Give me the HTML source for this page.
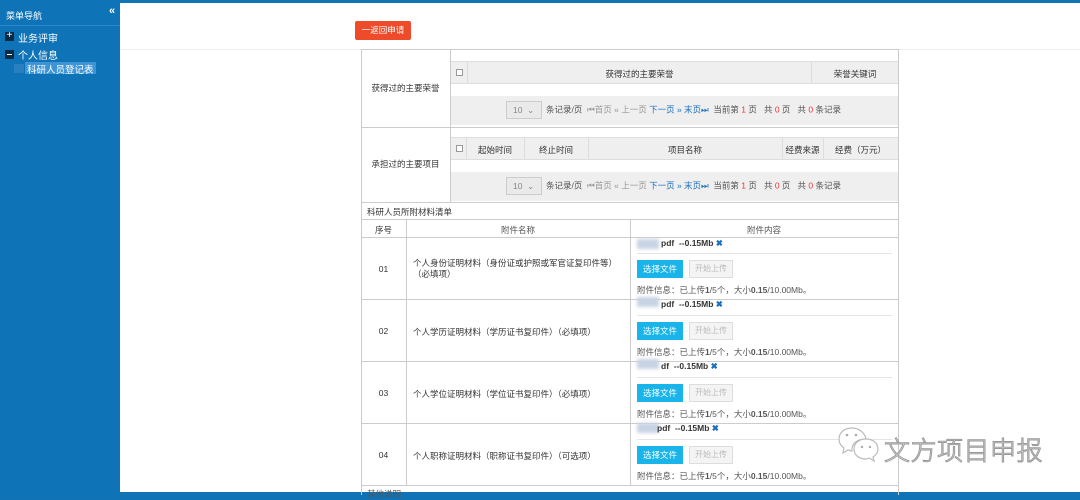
<!DOCTYPE html>
<html><head><meta charset="utf-8"><style>
*{margin:0;padding:0;box-sizing:border-box}
body{width:1080px;height:495px;overflow:hidden;background:#0f73b6;font-family:"Liberation Sans","Noto Sans CJK SC",sans-serif;font-size:9px;color:#333;position:relative}
.a{position:absolute}
.side{left:0;top:0;width:120px;height:495px;background:#0f74b7;color:#fff}
.main{left:120px;top:3px;width:960px;height:489px;background:#fff}
.b{border:1px solid #ccc}
.g{background:#efefef}
.c{text-align:center}
.ch{width:7px;height:7px;border:1px solid #999;background:#fff}
.pg{font-size:8.5px;color:#555;white-space:nowrap}
.sel{display:inline-block;width:36px;height:18px;border:1px solid #ccc;background:#eaeaea;color:#888;vertical-align:middle;padding:3px 0 0 6px;margin-right:4px}
.bl{color:#1b6fc0}.r{color:#e33}.gr{color:#999}
.btn{width:46px;height:18px;background:#19b4ea;color:#fff;text-align:center;line-height:18px;font-size:8.5px}
.btn2{width:44px;height:18px;background:#f4f4f4;border:1px solid #ddd;color:#bbb;text-align:center;line-height:16px;font-size:8px}
.blur{width:22px;height:10px;background:#c8d4e4;filter:blur(1.5px)}
</style></head><body>
<div class="a side">
<div class="a" style="left:6px;top:9px;font-size:9px">菜单导航</div>
<div class="a" style="left:109px;top:5px;font-size:11px;font-weight:bold">«</div>
<div class="a" style="left:0;top:25px;width:120px;height:1px;background:#2a86c8"></div>
<div class="a" style="left:5px;top:32px;width:9px;height:9px;background:#0b2a44;color:#fff;font-size:10px;line-height:8px;text-align:center">+</div>
<div class="a" style="left:18px;top:30px;font-size:10px">业务评审</div>
<div class="a" style="left:5px;top:50px;width:9px;height:9px;background:#0b2a44"><div class="a" style="left:2px;top:4px;width:5px;height:1px;background:#fff"></div></div>
<div class="a" style="left:18px;top:47px;font-size:10px">个人信息</div>
<div class="a" style="left:14px;top:64px;width:10px;height:9px;background:#2a7fc0"></div>
<div class="a" style="left:25px;top:62px;height:12px;background:#3d94d6;font-size:9.5px;padding:0 2px;white-space:nowrap">科研人员登记表</div>
</div>
<div class="a main"></div>
<div class="a" style="left:355px;top:21px;width:56px;height:19px;background:#ee4b2b;border-radius:2px;color:#fff;font-size:8.5px;line-height:19px;text-align:center">一返回申请</div>
<div class="a" style="left:120px;top:49px;width:960px;height:1px;background:#eee"></div>
<div class="a b" style="left:361px;top:49px;width:538px;height:446px;border-bottom:none"></div>
<div class="a" style="left:450px;top:49px;width:1px;height:153px;background:#ccc"></div>
<div class="a" style="left:361px;top:127px;width:538px;height:1px;background:#ccc"></div>
<div class="a" style="left:361px;top:202px;width:538px;height:1px;background:#ccc"></div>
<div class="a c" style="left:361px;top:82px;width:89px;font-size:8.5px">获得过的主要荣誉</div>
<div class="a c" style="left:361px;top:158px;width:89px;font-size:8.5px">承担过的主要项目</div>
<div class="a g" style="left:451px;top:61px;width:447px;height:23px;border-top:1px solid #ddd;border-bottom:1px solid #ddd"></div>
<div class="a ch" style="left:456px;top:69px"></div>
<div class="a" style="left:467px;top:61px;width:1px;height:23px;background:#ddd"></div>
<div class="a" style="left:811px;top:61px;width:1px;height:23px;background:#ddd"></div>
<div class="a c" style="left:468px;top:68px;width:343px;font-size:8.5px">获得过的主要荣誉</div>
<div class="a c" style="left:812px;top:68px;width:86px;font-size:8.5px">荣誉关键词</div>
<div class="a g" style="left:451px;top:96px;width:447px;height:29px"></div>
<div class="a pg" style="left:506px;top:101px"><span class="sel">10 &nbsp;⌄</span>条记录/页 &nbsp;<span class="gr">⏮首页 « 上一页</span> <span class="bl">下一页 » 末页⏭</span> &nbsp;当前第 <span class="r">1</span> 页 &nbsp; 共 <span class="r">0</span> 页 &nbsp; 共 <span class="r">0</span> 条记录</div>
<div class="a g" style="left:451px;top:137px;width:447px;height:23px;border-top:1px solid #ddd;border-bottom:1px solid #ddd"></div>
<div class="a ch" style="left:456px;top:145px"></div>
<div class="a" style="left:466px;top:137px;width:1px;height:23px;background:#ddd"></div>
<div class="a" style="left:524px;top:137px;width:1px;height:23px;background:#ddd"></div>
<div class="a" style="left:588px;top:137px;width:1px;height:23px;background:#ddd"></div>
<div class="a" style="left:782px;top:137px;width:1px;height:23px;background:#ddd"></div>
<div class="a" style="left:823px;top:137px;width:1px;height:23px;background:#ddd"></div>
<div class="a c" style="left:466px;top:144px;width:58px;font-size:8.5px">起始时间</div>
<div class="a c" style="left:524px;top:144px;width:64px;font-size:8.5px">终止时间</div>
<div class="a c" style="left:588px;top:144px;width:194px;font-size:8.5px">项目名称</div>
<div class="a c" style="left:782px;top:144px;width:41px;font-size:8.5px">经费来源</div>
<div class="a c" style="left:823px;top:144px;width:75px;font-size:8.5px">经费（万元）</div>
<div class="a g" style="left:451px;top:172px;width:447px;height:29px"></div>
<div class="a pg" style="left:506px;top:177px"><span class="sel">10 &nbsp;⌄</span>条记录/页 &nbsp;<span class="gr">⏮首页 « 上一页</span> <span class="bl">下一页 » 末页⏭</span> &nbsp;当前第 <span class="r">1</span> 页 &nbsp; 共 <span class="r">0</span> 页 &nbsp; 共 <span class="r">0</span> 条记录</div>
<div class="a" style="left:367px;top:206px;font-size:8.5px">科研人员所附材料清单</div>
<div class="a" style="left:361px;top:219px;width:538px;height:1px;background:#ccc"></div>
<div class="a" style="left:361px;top:237px;width:538px;height:1px;background:#ccc"></div>
<div class="a" style="left:406px;top:219px;width:1px;height:266px;background:#ccc"></div>
<div class="a" style="left:630px;top:219px;width:1px;height:266px;background:#ccc"></div>
<div class="a c" style="left:361px;top:224px;width:45px;font-size:8.5px">序号</div>
<div class="a c" style="left:406px;top:224px;width:224px;font-size:8.5px;color:#555">附件名称</div>
<div class="a c" style="left:630px;top:224px;width:268px;font-size:8.5px;color:#555">附件内容</div>
<div class="a" style="left:361px;top:299px;width:538px;height:1px;background:#ccc"></div>
<div class="a" style="left:361px;top:361px;width:538px;height:1px;background:#ccc"></div>
<div class="a" style="left:361px;top:423px;width:538px;height:1px;background:#ccc"></div>
<div class="a" style="left:361px;top:485px;width:538px;height:1px;background:#ccc"></div>
<div class="a" style="left:367px;top:488px;font-size:8.5px;color:#555">其他说明</div>
<div class="a c" style="left:361px;top:264px;width:45px;font-size:8.5px">01</div>
<div class="a" style="left:413px;top:258px;width:212px;font-size:8.5px;line-height:11px">个人身份证明材料（身份证或护照或军官证复印件等）（必填项）</div>
<div class="a c" style="left:361px;top:326px;width:45px;font-size:8.5px">02</div>
<div class="a" style="left:413px;top:326px;font-size:8.5px">个人学历证明材料（学历证书复印件）（必填项）</div>
<div class="a c" style="left:361px;top:388px;width:45px;font-size:8.5px">03</div>
<div class="a" style="left:413px;top:388px;font-size:8.5px">个人学位证明材料（学位证书复印件）（必填项）</div>
<div class="a c" style="left:361px;top:450px;width:45px;font-size:8.5px">04</div>
<div class="a" style="left:413px;top:450px;font-size:8.5px">个人职称证明材料（职称证书复印件）（可选项）</div>
<div class="a" style="left:631px;top:237px;width:267px;height:62px">
<div class="a blur" style="left:6px;top:2px"></div><div class="a" style="left:30px;top:1px;font-size:8.5px;font-weight:bold;color:#333">pdf &nbsp;--0.15Mb <span style="color:#1b6fc0">✖</span></div>
<div class="a" style="left:6px;top:16px;width:255px;height:1px;background:#e5e5e5"></div>
<div class="a btn" style="left:6px;top:23px">选择文件</div><div class="a btn2" style="left:58px;top:23px">开始上传</div>
<div class="a pg" style="left:6px;top:47px">附件信息：已上传<b>1</b>/5个，大小<b>0.15</b>/10.00Mb。</div></div>
<div class="a" style="left:631px;top:299px;width:267px;height:62px">
<div class="a blur" style="left:6px;top:-2px"></div><div class="a" style="left:30px;top:0px;font-size:8.5px;font-weight:bold;color:#333">pdf &nbsp;--0.15Mb <span style="color:#1b6fc0">✖</span></div>
<div class="a" style="left:6px;top:16px;width:255px;height:1px;background:#e5e5e5"></div>
<div class="a btn" style="left:6px;top:23px">选择文件</div><div class="a btn2" style="left:58px;top:23px">开始上传</div>
<div class="a pg" style="left:6px;top:47px">附件信息：已上传<b>1</b>/5个，大小<b>0.15</b>/10.00Mb。</div></div>
<div class="a" style="left:631px;top:361px;width:267px;height:62px">
<div class="a blur" style="left:6px;top:-2px"></div><div class="a" style="left:30px;top:0px;font-size:8.5px;font-weight:bold;color:#333">df &nbsp;--0.15Mb <span style="color:#1b6fc0">✖</span></div>
<div class="a" style="left:6px;top:16px;width:255px;height:1px;background:#e5e5e5"></div>
<div class="a btn" style="left:6px;top:23px">选择文件</div><div class="a btn2" style="left:58px;top:23px">开始上传</div>
<div class="a pg" style="left:6px;top:47px">附件信息：已上传<b>1</b>/5个，大小<b>0.15</b>/10.00Mb。</div></div>
<div class="a" style="left:631px;top:423px;width:267px;height:62px">
<div class="a blur" style="left:6px;top:0px"></div><div class="a" style="left:26px;top:0px;font-size:8.5px;font-weight:bold;color:#333">pdf &nbsp;--0.15Mb <span style="color:#1b6fc0">✖</span></div>
<div class="a" style="left:6px;top:16px;width:255px;height:1px;background:#e5e5e5"></div>
<div class="a btn" style="left:6px;top:23px">选择文件</div><div class="a btn2" style="left:58px;top:23px">开始上传</div>
<div class="a pg" style="left:6px;top:47px">附件信息：已上传<b>1</b>/5个，大小<b>0.15</b>/10.00Mb。</div></div>
<svg class="a" style="left:836px;top:425px" width="48" height="42" viewBox="0 0 48 42"><g fill="#fff" stroke="#bbb" stroke-width="1.2"><path d="M16 3c-8 0-13 5-13 11 0 4 2 7 5 9l-1 5 5-3c1 0 3 1 4 1 -1-8 6-12 14-12-1-6-7-11-14-11z"/><path d="M30 14c-7 0-12 4-12 10s5 10 12 10c1 0 2 0 3-1l5 3-1-4c3-2 5-5 5-8 0-6-5-10-12-10z"/></g><g fill="#aaa"><circle cx="11" cy="10" r="1.3"/><circle cx="20" cy="10" r="1.3"/><circle cx="26" cy="22" r="1.2"/><circle cx="34" cy="22" r="1.2"/></g></svg>
<div class="a" style="left:884px;top:431px;font-size:26px;color:#fff;-webkit-text-stroke:1px #999;letter-spacing:0.5px;font-family:'Noto Sans CJK SC',sans-serif;font-weight:300">文方项目申报</div>
</body></html>
